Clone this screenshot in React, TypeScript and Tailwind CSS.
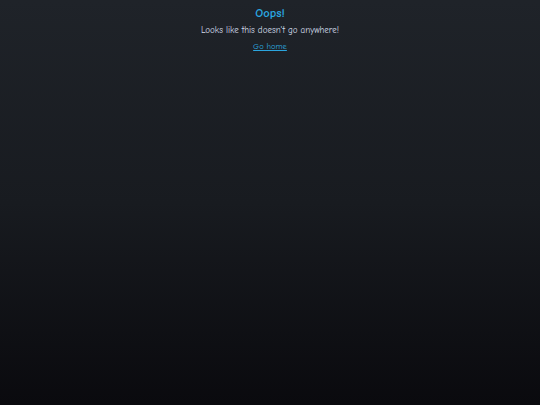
export default function App() {
  return (
    <div
      className="min-h-[405px] w-full bg-gradient-to-b from-[#1f2329] via-[#181b20] to-[#0a0a0e] text-[#d3dde9]"
      style={{ fontFamily: '"Comic Sans MS", "Comic Neue", cursive' }}
    >
      <div className="flex flex-col items-center pt-[6px]">
        <h1 className="text-[12.5px] font-bold leading-[15px] text-[#2aa9e3]">Oops!</h1>
        <p className="mt-[3px] text-[9px] leading-[12px]">Looks like this doesn't go anywhere!</p>
        <a href="#" className="mt-[4px] text-[8.5px] leading-[12px] text-[#2ba5de] underline">
          Go home
        </a>
      </div>
    </div>
  )
}
